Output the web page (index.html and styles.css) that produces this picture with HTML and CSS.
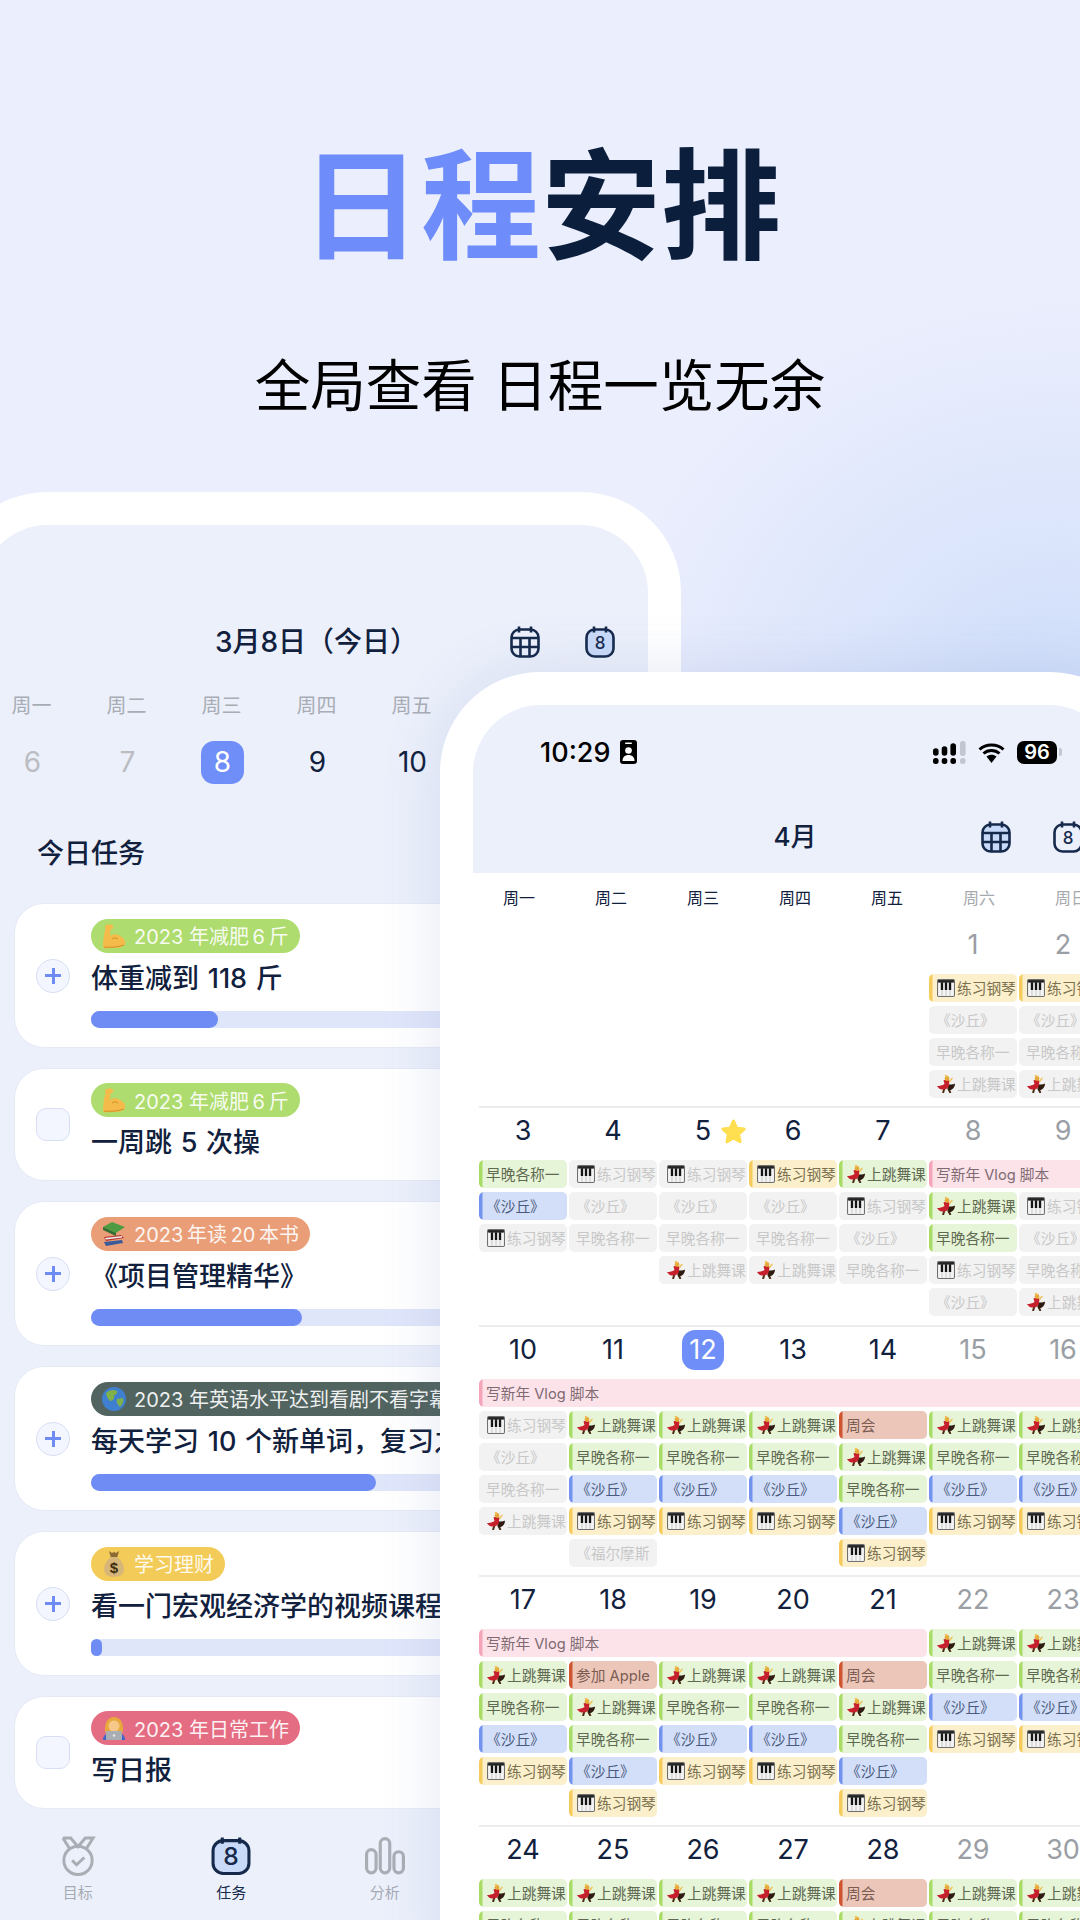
FILE: index.html
```html
<!DOCTYPE html>
<html lang="zh-CN">

<head>
    <meta charset="UTF-8">
    <title>日程安排</title>
    <link rel="stylesheet" href="styles.css">
</head>

<body>
    <!-- Icon sprite -->
    <svg class="sprite" xmlns="http://www.w3.org/2000/svg">
        <symbol id="piano" viewBox="0 0 17 17">
            <rect x=".5" y=".5" width="16" height="16" rx="1.2" fill="#f4f4f4" stroke="#6f6f6f"/>
            <rect x="1" y="1" width="15" height="2.4" fill="#222"/>
            <path d="M3.6 3h2.2v7.5H3.6zM7.4 3h2.2v7.5H7.4zM11.2 3h2.2v7.5h-2.2z" fill="#141414"/>
            <path d="M4.7 10.5V16M8.5 10.5V16M12.3 10.5V16" stroke="#b5b5b5" stroke-width=".7"/>
        </symbol>
        <symbol id="dancer" viewBox="0 0 18 18">
            <path d="M7.500 13L6 18M11 13l2.500 5" stroke="#4a2c14" stroke-width="2"/>
            <path d="M10.500 9c2.500 1 5.500.5 7.500-.5 0 4-3 7-6.500 7z" fill="#2e1a10"/>
            <path d="M6.500 5.500C8 4.500 11 4.500 12.500 6L12 9c.5 3.500-3 6-7 5.500-2-.2-4-1.500-5-3.500 3 0 5-.5 7.500-2z" fill="#c5202b"/>
            <circle cx="10" cy="3.500" r="2.400" fill="#e6a93c"/>
            <path d="M7.500 0l3-.2L9 3zM12 5.500L15 2.500l1 .8-3.500 4.500z" fill="#efc25a"/>
        </symbol>
        <symbol id="muscle" viewBox="0 0 24 26">
            <path d="M1 24C1 18 2 11 3.500 6L3 3C5 1 9 1 11 2.500v3l-2.500 1L8 13c3-2.500 7-2.500 10 0 4 2 6 5 5 8-2 4-8 4-13 4l-7 .5z" fill="#f4bb4a"/>
            <path d="M10 16c2-1.500 4-1.500 6 0M2 24c6 .5 14 .5 20-2" stroke="#d18f26" fill="none"/>
        </symbol>
        <symbol id="books" viewBox="0 0 24 26">
            <path d="M2 16l17-2 3 3-18 3z" fill="#b5342f"/>
            <path d="M2 21l18-2 1 3-17 3z" fill="#3b5a9a"/>
            <path d="M3 17l17-2v1.500L4 18.500z" fill="#eee"/>
            <path d="M1 6l9-5 13 5-9 6z" fill="#4f9b44"/>
            <path d="M1 6l13 6v3L1 9z" fill="#2f6f33"/>
        </symbol>
        <symbol id="globe" viewBox="0 0 24 24">
            <circle cx="12" cy="12" r="12" fill="#3f7fd0"/>
            <path d="M4 6c3-3 8-4 11-2 1 2-1 4-3 4 1 3-1 6-4 6-2-2-4-5-4-8zM15 12l6-1c1 3 0 6-3 9-2-2-4-5-3-8z" fill="#7fb04a"/>
        </symbol>
        <symbol id="bag" viewBox="0 0 24 26">
            <path d="M7 0l3 2 2-1 2 1 3-2-2 7H9z" fill="#8a6a35"/>
            <path d="M9 6h6c4 3 7 8 7 12 0 5-4 8-10 8S2 23 2 18c0-4 3-9 7-12z" fill="#d7b679"/>
            <text x="12" y="22" text-anchor="middle" font-size="15" font-weight="700" font-family="Liberation Sans" fill="#3d2e12">$</text>
        </symbol>
        <symbol id="worker" viewBox="0 0 24 24">
            <path d="M3 13C3 5 7 1 12 1s9 4 9 12c0 2 0 3-1 4H4c-1-1-1-2-1-4z" fill="#e8a93c"/>
            <circle cx="12" cy="10" r="5.500" fill="#f6c88a"/>
            <path d="M1 24c0-5 4-8 11-8s11 3 11 8z" fill="#3f63c8"/>
            <rect x="4" y="15" width="16" height="9" rx="1" fill="#a9adb4"/>
            <circle cx="12" cy="19.500" r="1.200" fill="#e8e8e8"/>
        </symbol>
        <symbol id="star" viewBox="0 0 26 26">
            <path d="M13 3l3 6.800 7.200.800-5.400 4.900 1.500 7.300L13 19.200l-6.300 3.600 1.500-7.300L2.800 10.600 10 9.800z" fill="#ffdf4f" stroke="#ffdf4f" stroke-width="3" stroke-linejoin="round"/>
        </symbol>
    </svg>

    <!-- Header Content -->
    <header class="hero">
        <h1 class="hero-title"><span class="accent">日程</span>安排</h1>
        <p class="hero-sub">全局查看 日程一览无余</p>
    </header>

    <!-- Day view phone -->
    <section class="phone phone-day">
        <div class="screen">
            <div class="bar">
                <span></span>
                <h2 class="bar-title">3月8日（今日）</h2>
                <div class="bar-icons">
                    <svg class="cal" viewBox="0 0 30 32">
                        <rect x="1.500" y="3.500" width="27" height="27" rx="8" fill="none"/>
                        <path d="M9 .5v6M21 .5v6M1.500 12h27M1.500 21h27M10.500 12v18M19.500 12v18"/>
                    </svg>
                    <svg class="cal" viewBox="0 0 30 32">
                        <rect x="1.500" y="3.500" width="27" height="27" rx="8" fill="#c9daf9"/>
                        <path d="M9 .5v6M21 .5v6"/>
                        <text x="15" y="23" class="cal-num">8</text>
                    </svg>
                </div>
            </div>

            <div class="week-strip">
                <span>周一</span><span>周二</span><span>周三</span><span>周四</span><span>周五</span>
            </div>
            <div class="day-strip">
                <span class="past">6</span><span class="past">7</span><span><b class="today">8</b></span><span>9</span><span>10</span>
            </div>

            <h3 class="section-title">今日任务</h3>

            <div class="cards">
                <div class="card">
                    <div class="check plus"></div>
                    <div class="card-body">
                        <div class="pill p-green"><svg class="pill-ico"><use href="#muscle"/></svg>2023 年减肥&thinsp;6&thinsp;斤</div>
                        <div class="card-title">体重减到 118 斤</div>
                        <div class="track"><div class="fill" style="width: 127px"></div></div>
                    </div>
                </div>
                <div class="card short">
                    <div class="check"></div>
                    <div class="card-body">
                        <div class="pill p-green"><svg class="pill-ico"><use href="#muscle"/></svg>2023 年减肥&thinsp;6&thinsp;斤</div>
                        <div class="card-title">一周跳 5 次操</div>
                    </div>
                </div>
                <div class="card">
                    <div class="check plus"></div>
                    <div class="card-body">
                        <div class="pill p-orange"><svg class="pill-ico"><use href="#books"/></svg>2023&thinsp;年读&thinsp;20&thinsp;本书</div>
                        <div class="card-title">《项目管理精华》</div>
                        <div class="track"><div class="fill" style="width: 211px"></div></div>
                    </div>
                </div>
                <div class="card">
                    <div class="check plus"></div>
                    <div class="card-body">
                        <div class="pill p-dark"><svg class="pill-ico"><use href="#globe"/></svg>2023 年英语水平达到看剧不看字幕</div>
                        <div class="card-title">每天学习 10 个新单词，复习之前单词</div>
                        <div class="track"><div class="fill" style="width: 285px"></div></div>
                    </div>
                </div>
                <div class="card">
                    <div class="check plus"></div>
                    <div class="card-body">
                        <div class="pill p-yellow"><svg class="pill-ico"><use href="#bag"/></svg>学习理财</div>
                        <div class="card-title">看一门宏观经济学的视频课程</div>
                        <div class="track"><div class="fill" style="width: 11px"></div></div>
                    </div>
                </div>
                <div class="card short">
                    <div class="check"></div>
                    <div class="card-body">
                        <div class="pill p-pink"><svg class="pill-ico"><use href="#worker"/></svg>2023 年日常工作</div>
                        <div class="card-title">写日报</div>
                    </div>
                </div>
            </div>

            <nav class="tabs">
                <div class="tab">
                    <svg class="tab-ico" viewBox="0 0 34 41">
                        <path d="M1.500 2h8l7.500 9 7.500-9h8l-7 11M1.500 2l7 11" fill="none"/>
                        <circle cx="17" cy="25" r="14.500" fill="none"/>
                        <path d="M11 25l4.500 4.500 8-7.500" fill="none"/>
                    </svg>
                    <span>目标</span>
                </div>
                <div class="tab active">
                    <svg class="tab-ico" viewBox="0 0 39 38">
                        <rect x="2" y="4" width="35" height="32" rx="10" fill="#c9daf9"/>
                        <path d="M11 1v6M28 1v6"/>
                        <text x="19.500" y="28" class="cal-num big">8</text>
                    </svg>
                    <span>任务</span>
                </div>
                <div class="tab">
                    <svg class="tab-ico" viewBox="0 0 38 36">
                        <rect x="1.500" y="12" width="9" height="22" rx="4.500" fill="none"/>
                        <rect x="14.500" y="1.500" width="9" height="32.500" rx="4.500" fill="none"/>
                        <rect x="27.500" y="14" width="9" height="20" rx="4.500" fill="none"/>
                    </svg>
                    <span>分析</span>
                </div>
            </nav>
        </div>
    </section>

    <!-- Month view phone -->
    <section class="phone phone-month">
        <div class="screen">
            <div class="month-head">
                <div class="status">
                    <div class="status-left">
                        <span class="clock">10:29</span>
                        <svg class="contact" viewBox="0 0 17 24">
                            <rect width="17" height="24" rx="3" fill="#000"/>
                            <rect x="5" y="2.500" width="7" height="1.600" rx=".8" fill="#fff"/>
                            <circle cx="8.500" cy="10.500" r="3.300" fill="#fff"/>
                            <path d="M2.500 21c0-4 2.500-6 6-6s6 2 6 6z" fill="#fff"/>
                        </svg>
                    </div>
                    <div class="status-right">
                        <svg class="signal" viewBox="0 0 33 23">
                            <path d="M0 10a2.800 2.800 0 015.600 0v2a2.800 2.800 0 01-5.600 0zM8.700 8a2.800 2.800 0 015.600 0v4a2.800 2.800 0 01-5.600 0zM17.400 5a2.800 2.800 0 015.600 0v7a2.800 2.800 0 01-5.600 0z" fill="#000"/>
                            <rect x="0" y="17" width="5.600" height="6" rx="2.500" fill="#000"/>
                            <rect x="8.700" y="17" width="5.600" height="6" rx="2.500" fill="#000"/>
                            <rect x="17.400" y="17" width="5.600" height="6" rx="2.500" fill="#000"/>
                            <rect x="27" y="0" width="5.600" height="15" rx="2.500" fill="#c2c6d0"/>
                            <rect x="27" y="17" width="5.600" height="6" rx="2.500" fill="#c2c6d0"/>
                        </svg>
                        <svg class="wifi" viewBox="0 0 27 21">
                            <path d="M1.500 7.500C8 1.500 19 1.500 25.500 7.500M5.500 11.500C10 7.500 17 7.500 21.500 11.500" fill="none" stroke="#000" stroke-width="3"/>
                            <path d="M8.500 14.600c3-2.400 7-2.400 10 0l-5 6.400z" fill="#000"/>
                        </svg>
                        <div class="battery"><span class="battery-num">96</span><i class="battery-nub"></i></div>
                    </div>
                </div>
                <div class="bar month-bar">
                    <span></span>
                    <h2 class="bar-title">4月</h2>
                    <div class="bar-icons month-icons">
                        <svg class="cal" viewBox="0 0 30 32">
                            <rect x="1.500" y="3.500" width="27" height="27" rx="8" fill="#c9daf9"/>
                            <path d="M9 .5v6M21 .5v6M1.500 12h27M1.500 21h27M10.500 12v18M19.500 12v18"/>
                        </svg>
                        <svg class="cal" viewBox="0 0 30 32">
                            <rect x="1.500" y="3.500" width="27" height="27" rx="8" fill="none"/>
                            <path d="M9 .5v6M21 .5v6"/>
                            <text x="15" y="23" class="cal-num">8</text>
                        </svg>
                    </div>
                </div>
            </div>

            <div class="month-days">
                <span>周一</span><span>周二</span><span>周三</span><span>周四</span><span>周五</span><span class="rest">周六</span><span class="rest">周日</span>
            </div>

            <!-- Week 1 -->
            <div class="week first">
                <div class="dates">
                    <span></span><span></span><span></span><span></span><span></span><span class="rest">1</span><span class="rest">2</span>
                </div>
                <div class="chips">
                    <div></div><div></div><div></div><div></div><div></div>
                    <div class="chip yellow"><svg class="ico"><use href="#piano"/></svg>练习钢琴</div>
                    <div class="chip yellow"><svg class="ico"><use href="#piano"/></svg>练习钢琴</div>
                    <div></div><div></div><div></div><div></div><div></div>
                    <div class="chip off">《沙丘》</div>
                    <div class="chip off">《沙丘》</div>
                    <div></div><div></div><div></div><div></div><div></div>
                    <div class="chip off">早晚各称一</div>
                    <div class="chip off">早晚各称一</div>
                    <div></div><div></div><div></div><div></div><div></div>
                    <div class="chip off"><svg class="ico"><use href="#dancer"/></svg>上跳舞课</div>
                    <div class="chip off"><svg class="ico"><use href="#dancer"/></svg>上跳舞课</div>
                </div>
            </div>

            <!-- Week 2 -->
            <div class="week five-rows">
                <div class="dates">
                    <span>3</span><span>4</span><span class="starred">5<svg class="star"><use href="#star"/></svg></span><span>6</span><span>7</span><span class="rest">8</span><span class="rest">9</span>
                </div>
                <div class="chips">
                    <div class="chip green">早晚各称一</div>
                    <div class="chip off"><svg class="ico"><use href="#piano"/></svg>练习钢琴</div>
                    <div class="chip off"><svg class="ico"><use href="#piano"/></svg>练习钢琴</div>
                    <div class="chip yellow"><svg class="ico"><use href="#piano"/></svg>练习钢琴</div>
                    <div class="chip green"><svg class="ico"><use href="#dancer"/></svg>上跳舞课</div>
                    <div class="chip pink span-2">写新年 Vlog 脚本</div>

                    <div class="chip blue">《沙丘》</div>
                    <div class="chip off">《沙丘》</div>
                    <div class="chip off">《沙丘》</div>
                    <div class="chip off">《沙丘》</div>
                    <div class="chip off"><svg class="ico"><use href="#piano"/></svg>练习钢琴</div>
                    <div class="chip green"><svg class="ico"><use href="#dancer"/></svg>上跳舞课</div>
                    <div class="chip off"><svg class="ico"><use href="#piano"/></svg>练习钢琴</div>

                    <div class="chip off"><svg class="ico"><use href="#piano"/></svg>练习钢琴</div>
                    <div class="chip off">早晚各称一</div>
                    <div class="chip off">早晚各称一</div>
                    <div class="chip off">早晚各称一</div>
                    <div class="chip off">《沙丘》</div>
                    <div class="chip green">早晚各称一</div>
                    <div class="chip off">《沙丘》</div>

                    <div></div><div></div>
                    <div class="chip off"><svg class="ico"><use href="#dancer"/></svg>上跳舞课</div>
                    <div class="chip off"><svg class="ico"><use href="#dancer"/></svg>上跳舞课</div>
                    <div class="chip off">早晚各称一</div>
                    <div class="chip off"><svg class="ico"><use href="#piano"/></svg>练习钢琴</div>
                    <div class="chip off">早晚各称一</div>

                    <div></div><div></div><div></div><div></div><div></div>
                    <div class="chip off">《沙丘》</div>
                    <div class="chip off"><svg class="ico"><use href="#dancer"/></svg>上跳舞课</div>
                </div>
            </div>

            <!-- Week 3 -->
            <div class="week">
                <div class="dates">
                    <span>10</span><span>11</span><span><b class="today small">12</b></span><span>13</span><span>14</span><span class="rest">15</span><span class="rest">16</span>
                </div>
                <div class="chips">
                    <div class="chip pink span-7">写新年 Vlog 脚本</div>

                    <div class="chip off"><svg class="ico"><use href="#piano"/></svg>练习钢琴</div>
                    <div class="chip green"><svg class="ico"><use href="#dancer"/></svg>上跳舞课</div>
                    <div class="chip green"><svg class="ico"><use href="#dancer"/></svg>上跳舞课</div>
                    <div class="chip green"><svg class="ico"><use href="#dancer"/></svg>上跳舞课</div>
                    <div class="chip red">周会</div>
                    <div class="chip green"><svg class="ico"><use href="#dancer"/></svg>上跳舞课</div>
                    <div class="chip green"><svg class="ico"><use href="#dancer"/></svg>上跳舞课</div>

                    <div class="chip off">《沙丘》</div>
                    <div class="chip green">早晚各称一</div>
                    <div class="chip green">早晚各称一</div>
                    <div class="chip green">早晚各称一</div>
                    <div class="chip green"><svg class="ico"><use href="#dancer"/></svg>上跳舞课</div>
                    <div class="chip green">早晚各称一</div>
                    <div class="chip green">早晚各称一</div>

                    <div class="chip off">早晚各称一</div>
                    <div class="chip blue">《沙丘》</div>
                    <div class="chip blue">《沙丘》</div>
                    <div class="chip blue">《沙丘》</div>
                    <div class="chip green">早晚各称一</div>
                    <div class="chip blue">《沙丘》</div>
                    <div class="chip blue">《沙丘》</div>

                    <div class="chip off"><svg class="ico"><use href="#dancer"/></svg>上跳舞课</div>
                    <div class="chip yellow"><svg class="ico"><use href="#piano"/></svg>练习钢琴</div>
                    <div class="chip yellow"><svg class="ico"><use href="#piano"/></svg>练习钢琴</div>
                    <div class="chip yellow"><svg class="ico"><use href="#piano"/></svg>练习钢琴</div>
                    <div class="chip blue">《沙丘》</div>
                    <div class="chip yellow"><svg class="ico"><use href="#piano"/></svg>练习钢琴</div>
                    <div class="chip yellow"><svg class="ico"><use href="#piano"/></svg>练习钢琴</div>

                    <div></div>
                    <div class="chip off">《福尔摩斯</div>
                    <div></div><div></div>
                    <div class="chip yellow"><svg class="ico"><use href="#piano"/></svg>练习钢琴</div>
                </div>
            </div>

            <!-- Week 4 -->
            <div class="week">
                <div class="dates">
                    <span>17</span><span>18</span><span>19</span><span>20</span><span>21</span><span class="rest">22</span><span class="rest">23</span>
                </div>
                <div class="chips">
                    <div class="chip pink span-5">写新年 Vlog 脚本</div>
                    <div class="chip green"><svg class="ico"><use href="#dancer"/></svg>上跳舞课</div>
                    <div class="chip green"><svg class="ico"><use href="#dancer"/></svg>上跳舞课</div>

                    <div class="chip green"><svg class="ico"><use href="#dancer"/></svg>上跳舞课</div>
                    <div class="chip red">参加 Apple</div>
                    <div class="chip green"><svg class="ico"><use href="#dancer"/></svg>上跳舞课</div>
                    <div class="chip green"><svg class="ico"><use href="#dancer"/></svg>上跳舞课</div>
                    <div class="chip red">周会</div>
                    <div class="chip green">早晚各称一</div>
                    <div class="chip green">早晚各称一</div>

                    <div class="chip green">早晚各称一</div>
                    <div class="chip green"><svg class="ico"><use href="#dancer"/></svg>上跳舞课</div>
                    <div class="chip green">早晚各称一</div>
                    <div class="chip green">早晚各称一</div>
                    <div class="chip green"><svg class="ico"><use href="#dancer"/></svg>上跳舞课</div>
                    <div class="chip blue">《沙丘》</div>
                    <div class="chip blue">《沙丘》</div>

                    <div class="chip blue">《沙丘》</div>
                    <div class="chip green">早晚各称一</div>
                    <div class="chip blue">《沙丘》</div>
                    <div class="chip blue">《沙丘》</div>
                    <div class="chip green">早晚各称一</div>
                    <div class="chip yellow"><svg class="ico"><use href="#piano"/></svg>练习钢琴</div>
                    <div class="chip yellow"><svg class="ico"><use href="#piano"/></svg>练习钢琴</div>

                    <div class="chip yellow"><svg class="ico"><use href="#piano"/></svg>练习钢琴</div>
                    <div class="chip blue">《沙丘》</div>
                    <div class="chip yellow"><svg class="ico"><use href="#piano"/></svg>练习钢琴</div>
                    <div class="chip yellow"><svg class="ico"><use href="#piano"/></svg>练习钢琴</div>
                    <div class="chip blue">《沙丘》</div>
                    <div></div><div></div>

                    <div></div>
                    <div class="chip yellow"><svg class="ico"><use href="#piano"/></svg>练习钢琴</div>
                    <div></div><div></div>
                    <div class="chip yellow"><svg class="ico"><use href="#piano"/></svg>练习钢琴</div>
                </div>
            </div>

            <!-- Week 5 -->
            <div class="week">
                <div class="dates">
                    <span>24</span><span>25</span><span>26</span><span>27</span><span>28</span><span class="rest">29</span><span class="rest">30</span>
                </div>
                <div class="chips">
                    <div class="chip green"><svg class="ico"><use href="#dancer"/></svg>上跳舞课</div>
                    <div class="chip green"><svg class="ico"><use href="#dancer"/></svg>上跳舞课</div>
                    <div class="chip green"><svg class="ico"><use href="#dancer"/></svg>上跳舞课</div>
                    <div class="chip green"><svg class="ico"><use href="#dancer"/></svg>上跳舞课</div>
                    <div class="chip red">周会</div>
                    <div class="chip green"><svg class="ico"><use href="#dancer"/></svg>上跳舞课</div>
                    <div class="chip green"><svg class="ico"><use href="#dancer"/></svg>上跳舞课</div>

                    <div class="chip green">早晚各称一</div>
                    <div class="chip green">早晚各称一</div>
                    <div class="chip green">早晚各称一</div>
                    <div class="chip green">早晚各称一</div>
                    <div class="chip green"><svg class="ico"><use href="#dancer"/></svg>上跳舞课</div>
                    <div class="chip green">早晚各称一</div>
                    <div class="chip green">早晚各称一</div>
                </div>
            </div>
        </div>
    </section>
</body>

</html>
```

FILE: styles.css
```css
body {
    font-family: Inter, "Noto Sans CJK SC", sans-serif;
    margin: 0;
    width: 1080px;
    height: 1920px;
    overflow: hidden;
    position: relative;
    color: #11213d;
    background-color: #ebeefd;
    background-image: radial-gradient(ellipse 460px 400px at 1060px 700px, #cfdefa 0%, rgba(207, 222, 250, 0) 100%);
}

h1,
h2,
h3,
p {
    margin: 0;
}

.sprite {
    display: none;
}

/* Hero */
.hero {
    text-align: center;
    padding-top: 147px;
}

.hero-title {
    font-size: 120px;
    line-height: 120px;
    font-weight: 700;
    color: #0b1e3c;
    padding-left: 2px;
}

.accent {
    color: #6e8dfb;
}

.hero-sub {
    font-size: 55.500px;
    line-height: 70px;
    font-weight: 400;
    color: #000;
    margin-top: 84px;
}

/* Phones */
.phone {
    background-color: white;
    border-radius: 100px;
    padding: 33px;
}

.screen {
    border-radius: 68px;
    overflow: hidden;
}

.phone-day {
    width: 668px;
    height: 1500px;
    margin-top: 71px;
    margin-left: -53px;
}

.phone-day .screen {
    background-color: #ecf0fb;
    height: 100%;
}

.phone-month {
    position: absolute;
    left: 440px;
    top: 672px;
    width: 644px;
    height: 1300px;
    box-shadow: 0 0 60px rgba(90, 110, 180, 0.16);
}

.phone-month .screen {
    background-color: white;
    height: 100%;
}

/* Top bar */
.bar {
    display: grid;
    grid-template-columns: 1fr auto 1fr;
    align-items: center;
    padding-top: 101px;
}

.phone-day .bar {
    padding-left: 5px;
}

.bar-title {
    font-size: 28px;
    line-height: 32px;
    font-weight: 500;
    white-space: nowrap;
}

.bar-icons {
    display: flex;
    justify-content: flex-end;
    gap: 45px;
    padding-right: 33px;
}

.cal {
    width: 30px;
    height: 32px;
    fill: none;
    stroke: #15294b;
    stroke-width: 2.600;
}

.cal-num {
    font-size: 17px;
    font-weight: 500;
    text-anchor: middle;
    fill: #15294b;
    stroke: none;
}

.cal-num.big {
    font-size: 24px;
}

/* Day view */
.week-strip,
.day-strip {
    display: grid;
    grid-template-columns: repeat(5, 95px);
    padding-left: 4px;
    text-align: center;
}

.week-strip {
    margin-top: 36px;
    font-size: 20px;
    line-height: 24px;
    color: #a8adb5;
}

.day-strip {
    margin-top: 23px;
    padding-left: 5px;
    font-size: 28px;
    line-height: 43px;
    height: 43px;
}

.past {
    color: #bbbdc2;
}

.today {
    display: inline-block;
    width: 43px;
    height: 43px;
    border-radius: 13px;
    background-color: #6f8ef8;
    color: white;
    font-weight: 400;
}

.today.small {
    width: 42px;
    height: 40px;
    line-height: 40px;
    border-radius: 13px;
}

.section-title {
    margin: 52px 0 31px 57px;
    font-size: 27px;
    line-height: 36px;
    font-weight: 500;
}

.cards {
    display: flex;
    flex-direction: column;
    gap: 20px;
    padding: 0 14px 0 34px;
}

.card {
    display: flex;
    align-items: center;
    gap: 21px;
    box-sizing: border-box;
    height: 145px;
    padding-left: 21px;
    background-color: white;
    border: 1px solid #e6eaf7;
    border-radius: 30px;
}

.card.short {
    height: 113px;
}

.check {
    flex: none;
    box-sizing: border-box;
    width: 34px;
    height: 33px;
    background-color: #f3f6fe;
    border: 1.500px solid #d8dff4;
    border-radius: 10px;
}

.check.plus {
    height: 34px;
    border-radius: 50%;
    background-image:
        linear-gradient(#6f8cf5, #6f8cf5),
        linear-gradient(#6f8cf5, #6f8cf5);
    background-size: 16px 3px, 3px 16px;
    background-position: center;
    background-repeat: no-repeat;
}

/* ends at the edge of the month phone, which covers the rest of the card */
.card-body {
    flex: none;
    width: 349px;
    padding-bottom: 5px;
    overflow: hidden;
}

.pill {
    display: inline-flex;
    align-items: center;
    height: 34px;
    padding: 0 11px;
    gap: 8px;
    border-radius: 17px;
    font-size: 20px;
    color: rgba(255, 255, 255, 0.92);
    white-space: nowrap;
}

.pill-ico {
    width: 24px;
    height: 26px;
}

.p-green {
    background-color: #aedc6e;
}

.p-orange {
    background-color: #e99e78;
}

.p-dark {
    background-color: #52645f;
}

.p-yellow {
    background-color: #f3cb58;
}

.p-pink {
    background-color: #e56d83;
}

.card-title {
    margin-top: 8px;
    font-size: 27px;
    line-height: 36px;
    font-weight: 500;
    word-spacing: 1.500px;
    white-space: nowrap;
}

.track {
    margin-top: 14px;
    height: 17px;
    border-radius: 9px 0 0 9px;
    background-color: #e0e6fa;
}

.fill {
    height: 100%;
    border-radius: 9px;
    background-color: #6f8cf5;
}

/* Tab bar */
.tabs {
    display: grid;
    grid-template-columns: repeat(3, 153.5px);
    margin-top: 27px;
    padding-left: 21px;
}

.tab {
    display: flex;
    flex-direction: column;
    align-items: center;
    gap: 7px;
    font-size: 15px;
    line-height: 20px;
    color: #a6abb3;
}

.tab.active {
    color: #15294b;
}

.tab-ico {
    height: 40px;
    width: 40px;
    stroke: #a9adb4;
    stroke-width: 3;
}

.tab.active .tab-ico {
    stroke: #15294b;
}

/* Month view header */
.month-head {
    background-color: #ecf0fb;
    height: 168px;
}

.status {
    display: flex;
    justify-content: space-between;
    align-items: center;
    height: 32px;
    padding: 31px 55px 1px 67px;
}

.status-left,
.status-right {
    display: flex;
    align-items: center;
}

.status-left {
    gap: 10px;
}

.status-right {
    gap: 12px;
}

.clock {
    font-size: 27px;
    font-weight: 500;
    color: #000;
}

.contact {
    width: 17px;
    height: 24px;
}

.signal {
    width: 33px;
    height: 23px;
}

.wifi {
    width: 27px;
    height: 21px;
}

.battery {
    display: flex;
    align-items: center;
    gap: 2px;
}

.battery-num {
    width: 40px;
    height: 23px;
    line-height: 23px;
    border-radius: 7px;
    background-color: #000;
    color: white;
    text-align: center;
    font-size: 20px;
    font-weight: 600;
}

.battery-nub {
    width: 3px;
    height: 8px;
    border-radius: 0 2px 2px 0;
    background-color: #c2c6d0;
}

.month-bar {
    padding-top: 52px;
}

.month-bar .bar-title {
    font-size: 26px;
}

.month-icons {
    gap: 42px;
    padding-right: 34px;
}

.month-days {
    display: grid;
    grid-template-columns: repeat(7, 92px);
    padding-top: 15px;
    font-size: 16px;
    line-height: 20px;
    text-align: center;
}

.month-days .rest {
    color: #a6a9ae;
}

/* Calendar weeks */
.week {
    width: 628px;
    margin-left: 6px;
    padding: 3px 0 8px;
    border-top: 2px solid #ececec;
}

.week.first {
    padding-top: 17px;
    border-top: none;
}

.week.five-rows {
    padding-bottom: 9px;
}

.dates,
.chips {
    display: grid;
    grid-template-columns: repeat(7, 88px);
    column-gap: 2px;
}

.dates {
    height: 40px;
    line-height: 40px;
    margin-bottom: 9px;
    font-size: 27px;
    text-align: center;
}

.dates .rest {
    color: #9a9ea5;
}

.starred {
    position: relative;
}

.star {
    position: absolute;
    left: 61px;
    top: 7px;
    width: 27px;
    height: 27px;
}

.chips {
    row-gap: 4px;
    grid-auto-rows: 28px;
}

.chip {
    display: flex;
    align-items: center;
    gap: 2px;
    box-sizing: border-box;
    padding: 0 0 2px 7px;
    border-radius: 5px;
    font-size: 14.700px;
    white-space: nowrap;
    overflow: hidden;
    background-repeat: no-repeat;
    background-size: 3.500px 100%;
}

.ico {
    flex: none;
    width: 18px;
    height: 18px;
    margin: 2px 0 0 1px;
}

.span-2 {
    grid-column: span 2;
}

.span-5 {
    grid-column: span 5;
}

.span-7 {
    grid-column: span 7;
}

.off {
    background-color: #f2f2f2;
    color: #c8c8c8;
}

.green {
    background-color: #e6f4d7;
    background-image: linear-gradient(#a8dc66, #a8dc66);
    color: #5f6a52;
}

.blue {
    background-color: #d3dff8;
    background-image: linear-gradient(#7493ee, #7493ee);
    color: #4b5b80;
}

.yellow {
    background-color: #fbf0cb;
    background-image: linear-gradient(#f5cb5c, #f5cb5c);
    color: #7c7150;
}

.pink {
    background-color: #fbe3e9;
    background-image: linear-gradient(#f5a5ba, #f5a5ba);
    color: #7f6a72;
}

.red {
    background-color: #edc6ba;
    background-image: linear-gradient(#cf5530, #cf5530);
    color: #7a5c52;
}
```
